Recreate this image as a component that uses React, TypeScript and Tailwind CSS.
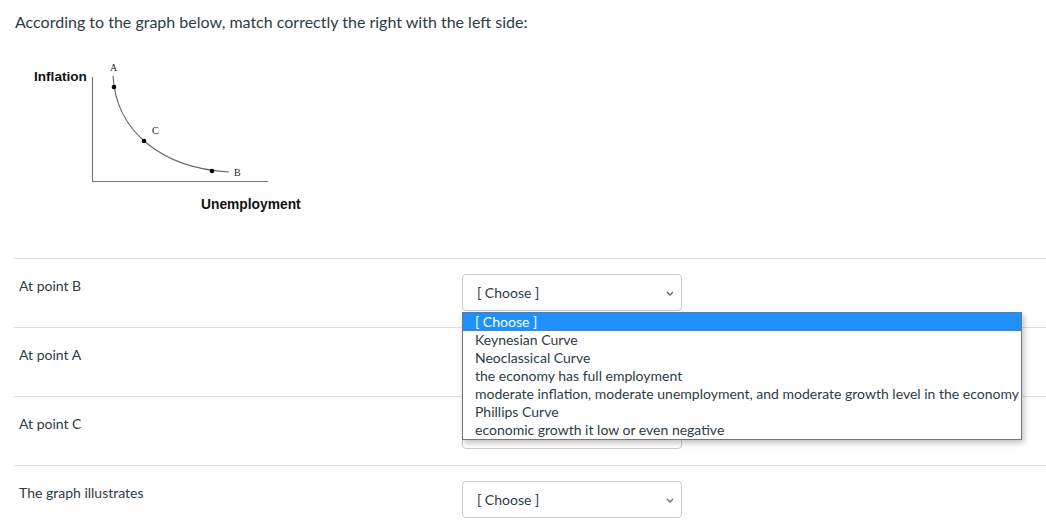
import React from 'react';

const options = [
  '[ Choose ]',
  'Keynesian Curve',
  'Neoclassical Curve',
  'the economy has full employment',
  'moderate inflation, moderate unemployment, and moderate growth level in the economy',
  'Phillips Curve',
  'economic growth it low or even negative',
];

const rows = ['At point B', 'At point A', 'At point C', 'The graph illustrates'];

function Graph() {
  // coordinates are page pixels minus (15, 45)
  return (
    <svg width="300" height="175" viewBox="15 45 300 175" className="block">
      <text x="34" y="81" fontFamily="Arial, 'Liberation Sans', sans-serif" fontSize="13.6" fontWeight="bold" fill="#111">
        Inflation
      </text>
      <line x1="92.5" y1="77" x2="92.5" y2="181.5" stroke="#777" strokeWidth="1.2" />
      <line x1="92" y1="181.5" x2="268" y2="181.5" stroke="#777" strokeWidth="1.2" />
      <path d="M113,76 C116,130 160,168 229,172" fill="none" stroke="#666" strokeWidth="1.1" />
      <circle cx="114" cy="87" r="2.3" fill="#000" />
      <circle cx="144" cy="141" r="2.3" fill="#000" />
      <circle cx="212" cy="171" r="2.3" fill="#000" />
      <text x="110" y="71" fontFamily="'Liberation Serif', serif" fontSize="10" fill="#222">A</text>
      <text x="152" y="134" fontFamily="'Liberation Serif', serif" fontSize="10" fill="#222">C</text>
      <text x="234" y="176" fontFamily="'Liberation Serif', serif" fontSize="10" fill="#222">B</text>
      <text x="201" y="209" fontFamily="Arial, 'Liberation Sans', sans-serif" fontSize="13.8" fontWeight="bold" fill="#111">
        Unemployment
      </text>
    </svg>
  );
}

function FakeSelect() {
  return (
    <div className="w-[220px] h-[37px] border border-[#c7cdd1] rounded-[4px] bg-white flex items-center justify-between pl-[14px] pr-[6px]">
      <span className="text-[14px] text-[#2d3b45]">[ Choose ]</span>
      <svg width="10" height="10" viewBox="0 0 10 10">
        <path d="M2,4 L5,7 L8,4" fill="none" stroke="#666" strokeWidth="1.3" />
      </svg>
    </div>
  );
}

export default function App() {
  return (
    <div className="relative min-h-[531px] bg-white text-[#2d3b45]" style={{ fontFamily: "Lato, 'Noto Sans', sans-serif" }}>
      <div className="pt-[10px] px-[15px]">
        <p className="text-[16px] leading-[24px]">According to the graph below, match correctly the right with the left side:</p>
        <div className="mt-[11px]">
          <Graph />
        </div>
      </div>

      <div className="mt-[38px] ml-[14px]">
        {rows.map((label, i) => (
          <div key={i} className="relative border-t border-[#dcdfe2] flex items-start pt-[15px] pb-[16px] h-[69px]">
            <div className="w-[448px] pl-[5px] pt-[2px] text-[14px] leading-[20px]">{label}</div>
            <FakeSelect />
            {i === 0 && (
              <div className="absolute left-[448px] top-[53px] w-[560px] bg-white border border-[#767676] shadow-[2px_3px_6px_rgba(0,0,0,0.25)] z-10 py-0">
                {options.map((o, j) => (
                  <div
                    key={j}
                    className={
                      'h-[18px] leading-[18px] pl-[12px] text-[14px] whitespace-nowrap ' +
                      (j === 0 ? 'bg-[#1e90ff] text-white' : 'text-[#2d3b45]')
                    }
                  >
                    {o}
                  </div>
                ))}
              </div>
            )}
          </div>
        ))}
      </div>
    </div>
  );
}
